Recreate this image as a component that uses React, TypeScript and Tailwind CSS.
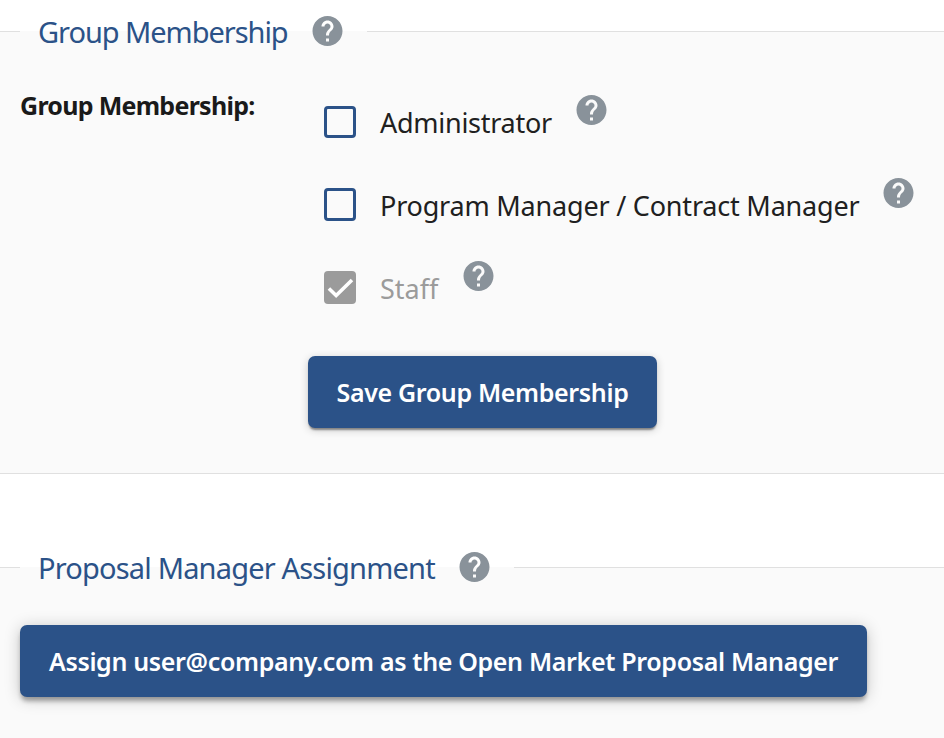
import { useState } from "react";
import { MdHelp } from "react-icons/md";
import clsx from "clsx";

function HelpIcon({ className }: { className?: string }) {
  return <MdHelp className={clsx("h-9 w-[37px] shrink-0 text-[#89929a]", className)} />;
}

interface GroupCheckboxProps {
  label: string;
  labelClass: string;
  boxClass?: string;
  checked: boolean;
  disabled?: boolean;
  onChange?: () => void;
}

function GroupCheckbox({
  label,
  labelClass,
  boxClass = "mt-[13px] h-[33px]",
  checked,
  disabled = false,
  onChange,
}: GroupCheckboxProps) {
  return (
    <div className="flex h-[83px] items-start">
      <button
        type="button"
        role="checkbox"
        aria-checked={checked}
        aria-label={label}
        disabled={disabled}
        onClick={onChange}
        className={clsx(
          "flex w-8 shrink-0 items-center justify-center rounded-[4px]",
          disabled ? "bg-[#9b9b9b]" : "border-3 border-[#2b5288]",
          boxClass
        )}
      >
        {checked && (
          <svg viewBox="0 0 24 24" className="size-8 shrink-0" fill="none" stroke="#fff" strokeWidth="2.7">
            <path d="M3.7 12.4 9.1 17.6 21 6" />
          </svg>
        )}
      </button>
      <span
        className={clsx(
          "ml-6 mt-[11px] h-10 shrink-0 whitespace-nowrap text-[27px] leading-10",
          disabled ? "text-[#9b9b9b]" : "text-[#202020]",
          labelClass
        )}
      >
        {label}
      </span>
      <HelpIcon className="ml-5" />
    </div>
  );
}

export default function App() {
  const [admin, setAdmin] = useState(false);
  const [manager, setManager] = useState(false);

  return (
    <div className="h-[738px] overflow-hidden bg-white font-['Noto_Sans',sans-serif]">
      {/* Group membership */}
      <fieldset className="h-[474px] border-y border-[#e0e0e0] bg-[#fafafa]">
        <legend className="ml-5 flex h-[63px] w-[347px] items-center pb-0.5 pl-[18px]">
          <span className="w-[251px] whitespace-nowrap pt-[3px] text-[29px] leading-10 tracking-[-1.05px] text-[#2b5288]">
            Group Membership
          </span>
          <HelpIcon className="ml-5" />
        </legend>

        <div className="flex pl-5 pt-[29px]">
          <div className="-mt-[3px] w-[304px] whitespace-nowrap text-[25px] font-bold leading-8 tracking-[-0.72px] text-[#1a1a1a]">
            Group Membership:
          </div>
          <div>
            <GroupCheckbox
              label="Administrator"
              labelClass="w-[173px] tracking-[-0.27px]"
              boxClass="mt-3.5 h-8"
              checked={admin}
              onChange={() => setAdmin(!admin)}
            />
            <GroupCheckbox
              label="Program Manager / Contract Manager"
              labelClass="w-[480px] tracking-[-0.2px]"
              checked={manager}
              onChange={() => setManager(!manager)}
            />
            <GroupCheckbox label="Staff" labelClass="w-[60px]" checked disabled />
          </div>
        </div>

        <button
          type="button"
          className="ml-[308px] mt-[15px] flex h-[72px] w-[349px] items-center justify-center whitespace-nowrap rounded-[7px] bg-[#2b5288] pt-0.5 text-[25px] font-semibold tracking-[-0.34px] text-white shadow-[0_3px_2px_-1px_rgba(0,0,0,0.4),0_2px_8px_rgba(0,0,0,0.2)]"
        >
          Save Group Membership
        </button>
      </fieldset>

      {/* Proposal manager */}
      <fieldset className="mt-[62px] h-[240px] border-y border-[#e0e0e0] bg-[#fafafa]">
        <legend className="ml-5 flex h-[63px] w-[494px] items-center pb-0.5 pl-[18px]">
          <span className="w-[398px] whitespace-nowrap pt-[3px] text-[29px] leading-10 tracking-[-0.82px] text-[#2b5288]">
            Proposal Manager Assignment
          </span>
          <HelpIcon className="ml-5" />
        </legend>
        <button
          type="button"
          className="ml-5 mt-[26px] flex h-[72px] w-[847px] items-center justify-center whitespace-nowrap rounded-[7px] bg-[#2b5288] pt-0.5 text-[25px] font-semibold tracking-[-0.34px] text-white shadow-[0_5px_4px_-1px_rgba(0,0,0,0.3),0_2px_16px_rgba(0,0,0,0.22)]"
        >
          Assign user@company.com as the Open Market Proposal Manager
        </button>
      </fieldset>
    </div>
  );
}
